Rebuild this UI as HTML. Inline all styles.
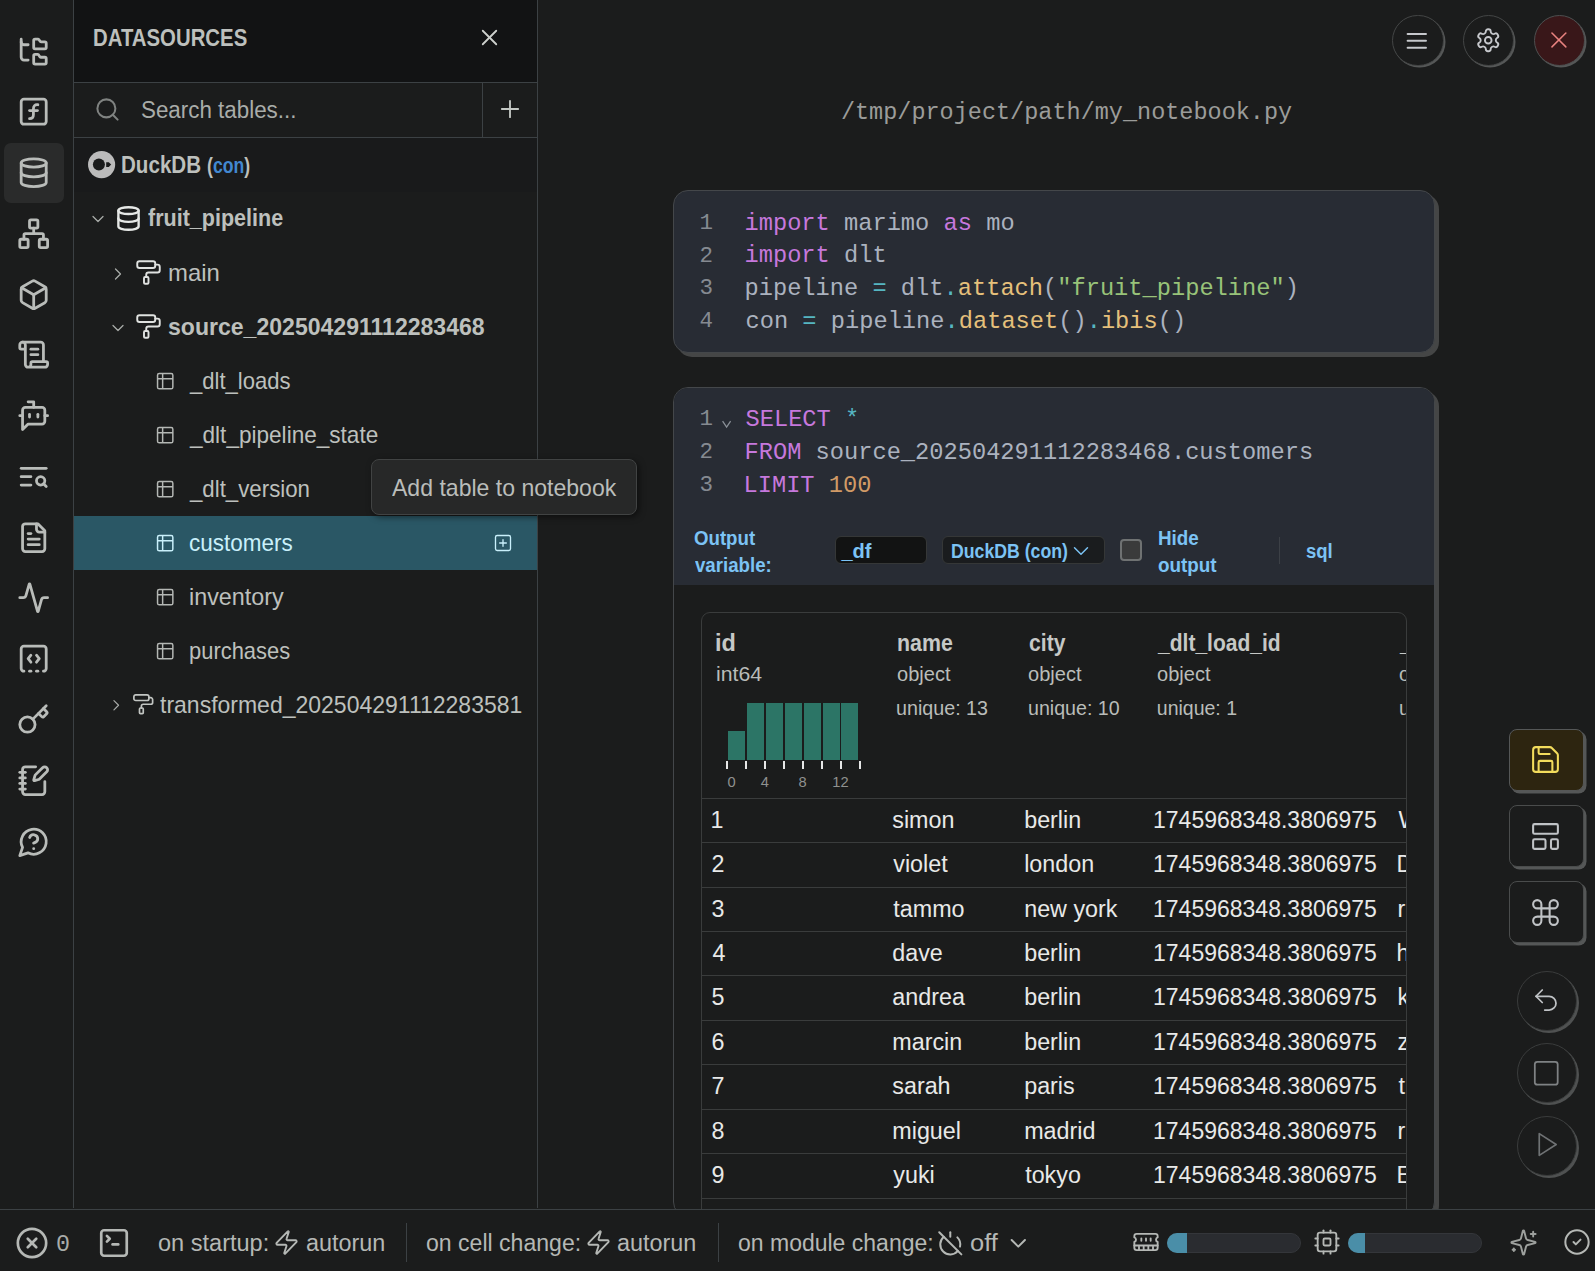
<!DOCTYPE html>
<html><head><meta charset="utf-8"><style>
html,body{margin:0;padding:0;}
body{width:1595px;height:1271px;overflow:hidden;position:relative;background:#1b1c1c;font-family:'Liberation Sans', sans-serif;}
.t{position:absolute;white-space:pre;line-height:1;}
.b{position:absolute;}
.ic{position:absolute;overflow:visible;}
</style></head><body>
<div class="b" style="left:0px;top:0px;width:73px;height:1208px;background:#1b1c1c;border-right:1px solid #3c4144"></div>
<div class="b" style="left:4px;top:143px;width:60px;height:60px;background:#2a2b2b;border-radius:7px"></div>
<svg class="ic" style="left:17.0px;top:34.5px;width:33.4px;height:33.4px;" viewBox="0 0 24 24" fill="none" stroke="#b9bcb9" stroke-width="2.0" stroke-linecap="round" stroke-linejoin="round"><path d="M20 10a1 1 0 0 0 1-1V6a1 1 0 0 0-1-1h-2.5a1 1 0 0 1-.8-.4l-.9-1.2A1 1 0 0 0 15 3h-2a1 1 0 0 0-1 1v5a1 1 0 0 0 1 1Z"/><path d="M20 21a1 1 0 0 0 1-1v-3a1 1 0 0 0-1-1h-2.9a1 1 0 0 1-.88-.55l-.42-.85a1 1 0 0 0-.92-.6H13a1 1 0 0 0-1 1v5a1 1 0 0 0 1 1Z"/><path d="M3 5a2 2 0 0 0 2 2h3"/><path d="M3 3v13a2 2 0 0 0 2 2h3"/></svg>
<svg class="ic" style="left:17.0px;top:95.3px;width:33.4px;height:33.4px;" viewBox="0 0 24 24" fill="none" stroke="#b9bcb9" stroke-width="2.0" stroke-linecap="round" stroke-linejoin="round"><rect width="18" height="18" x="3" y="3" rx="2" ry="2"/><path d="M9 17c2 0 2.8-1 2.8-2.8V10c0-2 1-3.3 3.2-3"/><path d="M9 11.2h5.7"/></svg>
<svg class="ic" style="left:17.0px;top:156.0px;width:33.4px;height:33.4px;" viewBox="0 0 24 24" fill="none" stroke="#b9bcb9" stroke-width="2.0" stroke-linecap="round" stroke-linejoin="round"><ellipse cx="12" cy="5" rx="9" ry="3"/><path d="M3 5V19A9 3 0 0 0 21 19V5"/><path d="M3 12A9 3 0 0 0 21 12"/></svg>
<svg class="ic" style="left:17.0px;top:216.8px;width:33.4px;height:33.4px;" viewBox="0 0 24 24" fill="none" stroke="#b9bcb9" stroke-width="2.0" stroke-linecap="round" stroke-linejoin="round"><rect x="16" y="16" width="6" height="6" rx="1"/><rect x="2" y="16" width="6" height="6" rx="1"/><rect x="9" y="2" width="6" height="6" rx="1"/><path d="M5 16v-3a1 1 0 0 1 1-1h12a1 1 0 0 1 1 1v3"/><path d="M12 12V8"/></svg>
<svg class="ic" style="left:17.0px;top:277.6px;width:33.4px;height:33.4px;" viewBox="0 0 24 24" fill="none" stroke="#b9bcb9" stroke-width="2.0" stroke-linecap="round" stroke-linejoin="round"><path d="M21 8a2 2 0 0 0-1-1.73l-7-4a2 2 0 0 0-2 0l-7 4A2 2 0 0 0 3 8v8a2 2 0 0 0 1 1.73l7 4a2 2 0 0 0 2 0l7-4A2 2 0 0 0 21 16Z"/><path d="m3.3 7 8.7 5 8.7-5"/><path d="M12 22V12"/></svg>
<svg class="ic" style="left:17.0px;top:338.4px;width:33.4px;height:33.4px;" viewBox="0 0 24 24" fill="none" stroke="#b9bcb9" stroke-width="2.0" stroke-linecap="round" stroke-linejoin="round"><path d="M15 12h-5"/><path d="M15 8h-5"/><path d="M19 17V5a2 2 0 0 0-2-2H4"/><path d="M8 21h12a2 2 0 0 0 2-2v-1a1 1 0 0 0-1-1H11a1 1 0 0 0-1 1v1a2 2 0 1 1-4 0V5a2 2 0 1 0-4 0v2a1 1 0 0 0 1 1h3"/></svg>
<svg class="ic" style="left:17.0px;top:399.1px;width:33.4px;height:33.4px;" viewBox="0 0 24 24" fill="none" stroke="#b9bcb9" stroke-width="2.0" stroke-linecap="round" stroke-linejoin="round"><path d="M12 6V2H8"/><path d="m8 18-4 4V8a2 2 0 0 1 2-2h12a2 2 0 0 1 2 2v8a2 2 0 0 1-2 2Z"/><path d="M2 12h2"/><path d="M9 11v2"/><path d="M15 11v2"/><path d="M20 12h2"/></svg>
<svg class="ic" style="left:17.0px;top:459.9px;width:33.4px;height:33.4px;" viewBox="0 0 24 24" fill="none" stroke="#b9bcb9" stroke-width="2.0" stroke-linecap="round" stroke-linejoin="round"><path d="M21 6H3"/><path d="M10 12H3"/><path d="M10 18H3"/><circle cx="17" cy="15" r="3"/><path d="m21 19-1.9-1.9"/></svg>
<svg class="ic" style="left:17.0px;top:520.7px;width:33.4px;height:33.4px;" viewBox="0 0 24 24" fill="none" stroke="#b9bcb9" stroke-width="2.0" stroke-linecap="round" stroke-linejoin="round"><path d="M15 2H6a2 2 0 0 0-2 2v16a2 2 0 0 0 2 2h12a2 2 0 0 0 2-2V7Z"/><path d="M14 2v4a2 2 0 0 0 2 2h4"/><path d="M10 9H8"/><path d="M16 13H8"/><path d="M16 17H8"/></svg>
<svg class="ic" style="left:17.0px;top:581.4px;width:33.4px;height:33.4px;" viewBox="0 0 24 24" fill="none" stroke="#b9bcb9" stroke-width="2.0" stroke-linecap="round" stroke-linejoin="round"><path d="M22 12h-2.48a2 2 0 0 0-1.93 1.46l-2.35 8.36a.25.25 0 0 1-.48 0L9.24 2.18a.25.25 0 0 0-.48 0l-2.35 8.36A2 2 0 0 1 4.49 12H2"/></svg>
<svg class="ic" style="left:17.0px;top:642.2px;width:33.4px;height:33.4px;" viewBox="0 0 24 24" fill="none" stroke="#b9bcb9" stroke-width="2.0" stroke-linecap="round" stroke-linejoin="round"><path d="M10 9.5 8 12l2 2.5"/><path d="M14 21h1"/><path d="m14 9.5 2 2.5-2 2.5"/><path d="M5 21a2 2 0 0 1-2-2V5a2 2 0 0 1 2-2h14a2 2 0 0 1 2 2v14a2 2 0 0 1-2 2"/><path d="M9 21h1"/></svg>
<svg class="ic" style="left:17.0px;top:703.0px;width:33.4px;height:33.4px;" viewBox="0 0 24 24" fill="none" stroke="#b9bcb9" stroke-width="2.0" stroke-linecap="round" stroke-linejoin="round"><path d="m15.5 7.5 2.3 2.3a1 1 0 0 0 1.4 0l2.1-2.1a1 1 0 0 0 0-1.4L19 4"/><path d="m21 2-9.6 9.6"/><circle cx="7.5" cy="15.5" r="5.5"/></svg>
<svg class="ic" style="left:17.0px;top:763.7px;width:33.4px;height:33.4px;" viewBox="0 0 24 24" fill="none" stroke="#b9bcb9" stroke-width="2.0" stroke-linecap="round" stroke-linejoin="round"><path d="M13.4 2H6a2 2 0 0 0-2 2v16a2 2 0 0 0 2 2h12a2 2 0 0 0 2-2v-7.4"/><path d="M2 6h4"/><path d="M2 10h4"/><path d="M2 14h4"/><path d="M2 18h4"/><path d="M21.378 5.626a1 1 0 1 0-3.004-3.004l-5.01 5.012a2 2 0 0 0-.506.854l-.837 2.87a.5.5 0 0 0 .62.62l2.87-.837a2 2 0 0 0 .854-.506z"/></svg>
<svg class="ic" style="left:17.0px;top:824.5px;width:33.4px;height:33.4px;" viewBox="0 0 24 24" fill="none" stroke="#b9bcb9" stroke-width="2.0" stroke-linecap="round" stroke-linejoin="round"><path d="M7.9 20A9 9 0 1 0 4 16.1L2 22Z"/><path d="M9.09 9a3 3 0 0 1 5.83 1c0 2-3 3-3 3"/><path d="M12 17h.01"/></svg>
<div class="b" style="left:74px;top:0px;width:463px;height:82px;background:#121314"></div>
<div class="b" style="left:74px;top:82px;width:463px;height:1px;background:#3c4144"></div>
<div class="b" style="left:74px;top:137px;width:463px;height:1px;background:#3c4144"></div>
<div class="b" style="left:482px;top:83px;width:1px;height:54px;background:#3c4144"></div>
<div class="b" style="left:537px;top:0px;width:1px;height:1208px;background:#3c4144"></div>
<div class="b" style="left:74px;top:138px;width:463px;height:54px;background:#191a1b"></div>
<div class="t" style="left:93.1px;top:27px;font-size:23.7px;color:#bdc0bd;font-weight:700;font-family:'Liberation Sans', sans-serif;transform:scaleX(0.8596);transform-origin:0 0;">DATASOURCES</div>
<svg class="ic" style="left:475.8px;top:23.9px;width:27px;height:27px;" viewBox="0 0 24 24" fill="none" stroke="#cdd0cd" stroke-width="1.6" stroke-linecap="round" stroke-linejoin="round"><path d="M18 6 6 18"/><path d="m6 6 12 12"/></svg>
<svg class="ic" style="left:93.9px;top:95.7px;width:27px;height:27px;" viewBox="0 0 24 24" fill="none" stroke="#7f8280" stroke-width="1.8" stroke-linecap="round" stroke-linejoin="round"><circle cx="11" cy="11" r="8"/><path d="m21 21-4.3-4.3"/></svg>
<div class="t" style="left:141.2px;top:99px;font-size:23.5px;color:#a9aca9;font-weight:400;font-family:'Liberation Sans', sans-serif;transform:scaleX(0.9519);transform-origin:0 0;">Search tables...</div>
<svg class="ic" style="left:495.7px;top:95.3px;width:28px;height:28px;" viewBox="0 0 24 24" fill="none" stroke="#c4c8c4" stroke-width="1.6" stroke-linecap="round" stroke-linejoin="round"><path d="M5 12h14"/><path d="M12 5v14"/></svg>
<svg class="ic" style="left:87.9px;top:150.8px;width:27.2px;height:27.2px" viewBox="0 0 27.2 27.2"><circle cx="13.6" cy="13.6" r="13.6" fill="#bbbbbb"/><circle cx="10.9" cy="13.6" r="6" fill="#1a1b1b"/><path d="M18.2 11.3h2.6l2.4 2.3-2.4 2.3h-2.6z" fill="#1a1b1b"/></svg>
<div class="t" style="left:120.5px;top:153px;font-size:24px;color:#bdc0bd;font-weight:700;font-family:'Liberation Sans', sans-serif;transform:scaleX(0.8578);transform-origin:0 0;">DuckDB</div>
<div class="t" style="left:207.1px;top:156px;font-size:21.5px;color:#bdc0bd;font-weight:700;font-family:'Liberation Sans', sans-serif;transform:scaleX(0.8196);transform-origin:0 0;">(<span style="color:#4288d0">con</span>)</div>
<svg class="ic" style="left:88.0px;top:209.0px;width:20px;height:20px;" viewBox="0 0 24 24" fill="none" stroke="#a9aca9" stroke-width="1.5" stroke-linecap="round" stroke-linejoin="round"><path d="m6 9 6 6 6-6"/></svg>
<svg class="ic" style="left:115.0px;top:204.8px;width:27px;height:27px;" viewBox="0 0 24 24" fill="none" stroke="#e6e8e6" stroke-width="2.1" stroke-linecap="round" stroke-linejoin="round"><ellipse cx="12" cy="5" rx="9" ry="3"/><path d="M3 5V19A9 3 0 0 0 21 19V5"/><path d="M3 12A9 3 0 0 0 21 12"/></svg>
<div class="t" style="left:148.4px;top:207px;font-size:23.6px;color:#bdc0bd;font-weight:700;font-family:'Liberation Sans', sans-serif;transform:scaleX(0.9122);transform-origin:0 0;">fruit_pipeline</div>
<svg class="ic" style="left:108.4px;top:263.8px;width:20px;height:20px;" viewBox="0 0 24 24" fill="none" stroke="#a9aca9" stroke-width="1.5" stroke-linecap="round" stroke-linejoin="round"><path d="m9 18 6-6-6-6"/></svg>
<svg class="ic" style="left:135.0px;top:259.0px;width:27px;height:27px;" viewBox="0 0 24 24" fill="none" stroke="#e0e2e0" stroke-width="1.7" stroke-linecap="round" stroke-linejoin="round"><rect width="16" height="6" x="2" y="2" rx="2"/><path d="M10 16v-2a2 2 0 0 1 2-2h8a2 2 0 0 0 2-2V7a2 2 0 0 0-2-2h-2"/><rect width="4" height="6" x="8" y="16" rx="1"/></svg>
<div class="t" style="left:167.8px;top:262px;font-size:23.6px;color:#bdc0bd;font-weight:400;font-family:'Liberation Sans', sans-serif;transform:scaleX(1.0125);transform-origin:0 0;">main</div>
<svg class="ic" style="left:108.0px;top:317.7px;width:20px;height:20px;" viewBox="0 0 24 24" fill="none" stroke="#a9aca9" stroke-width="1.5" stroke-linecap="round" stroke-linejoin="round"><path d="m6 9 6 6 6-6"/></svg>
<svg class="ic" style="left:135.0px;top:313.0px;width:27px;height:27px;" viewBox="0 0 24 24" fill="none" stroke="#e0e2e0" stroke-width="1.7" stroke-linecap="round" stroke-linejoin="round"><rect width="16" height="6" x="2" y="2" rx="2"/><path d="M10 16v-2a2 2 0 0 1 2-2h8a2 2 0 0 0 2-2V7a2 2 0 0 0-2-2h-2"/><rect width="4" height="6" x="8" y="16" rx="1"/></svg>
<div class="t" style="left:167.7px;top:316px;font-size:23.6px;color:#bdc0bd;font-weight:700;font-family:'Liberation Sans', sans-serif;transform:scaleX(0.9771);transform-origin:0 0;">source_202504291112283468</div>
<div class="b" style="left:74px;top:516px;width:463px;height:54px;background:#2a5765"></div>
<svg class="ic" style="left:155.0px;top:370.8px;width:20.4px;height:20.4px;" viewBox="0 0 24 24" fill="none" stroke="#b4b7b4" stroke-width="1.75" stroke-linecap="round" stroke-linejoin="round"><path d="M9 3H5a2 2 0 0 0-2 2v4m6-6h10a2 2 0 0 1 2 2v4M9 3v18m0 0h10a2 2 0 0 0 2-2V9M9 21H5a2 2 0 0 1-2-2V9m0 0h18"/></svg>
<div class="t" style="left:189.6px;top:370px;font-size:23.6px;color:#bdc0bd;font-weight:400;font-family:'Liberation Sans', sans-serif;transform:scaleX(0.9346);transform-origin:0 0;">_dlt_loads</div>
<svg class="ic" style="left:155.0px;top:424.8px;width:20.4px;height:20.4px;" viewBox="0 0 24 24" fill="none" stroke="#b4b7b4" stroke-width="1.75" stroke-linecap="round" stroke-linejoin="round"><path d="M9 3H5a2 2 0 0 0-2 2v4m6-6h10a2 2 0 0 1 2 2v4M9 3v18m0 0h10a2 2 0 0 0 2-2V9M9 21H5a2 2 0 0 1-2-2V9m0 0h18"/></svg>
<div class="t" style="left:189.6px;top:424px;font-size:23.6px;color:#bdc0bd;font-weight:400;font-family:'Liberation Sans', sans-serif;transform:scaleX(0.9566);transform-origin:0 0;">_dlt_pipeline_state</div>
<svg class="ic" style="left:155.0px;top:478.8px;width:20.4px;height:20.4px;" viewBox="0 0 24 24" fill="none" stroke="#b4b7b4" stroke-width="1.75" stroke-linecap="round" stroke-linejoin="round"><path d="M9 3H5a2 2 0 0 0-2 2v4m6-6h10a2 2 0 0 1 2 2v4M9 3v18m0 0h10a2 2 0 0 0 2-2V9M9 21H5a2 2 0 0 1-2-2V9m0 0h18"/></svg>
<div class="t" style="left:189.6px;top:478px;font-size:23.6px;color:#bdc0bd;font-weight:400;font-family:'Liberation Sans', sans-serif;transform:scaleX(0.9429);transform-origin:0 0;">_dlt_version</div>
<svg class="ic" style="left:155.0px;top:532.8px;width:20.4px;height:20.4px;" viewBox="0 0 24 24" fill="none" stroke="#c9f0fb" stroke-width="1.75" stroke-linecap="round" stroke-linejoin="round"><path d="M9 3H5a2 2 0 0 0-2 2v4m6-6h10a2 2 0 0 1 2 2v4M9 3v18m0 0h10a2 2 0 0 0 2-2V9M9 21H5a2 2 0 0 1-2-2V9m0 0h18"/></svg>
<div class="t" style="left:188.6px;top:532px;font-size:23.6px;color:#c9f0fb;font-weight:400;font-family:'Liberation Sans', sans-serif;transform:scaleX(0.9533);transform-origin:0 0;">customers</div>
<svg class="ic" style="left:155.0px;top:586.8px;width:20.4px;height:20.4px;" viewBox="0 0 24 24" fill="none" stroke="#b4b7b4" stroke-width="1.75" stroke-linecap="round" stroke-linejoin="round"><path d="M9 3H5a2 2 0 0 0-2 2v4m6-6h10a2 2 0 0 1 2 2v4M9 3v18m0 0h10a2 2 0 0 0 2-2V9M9 21H5a2 2 0 0 1-2-2V9m0 0h18"/></svg>
<div class="t" style="left:188.6px;top:586px;font-size:23.6px;color:#bdc0bd;font-weight:400;font-family:'Liberation Sans', sans-serif;transform:scaleX(0.9895);transform-origin:0 0;">inventory</div>
<svg class="ic" style="left:155.0px;top:640.8px;width:20.4px;height:20.4px;" viewBox="0 0 24 24" fill="none" stroke="#b4b7b4" stroke-width="1.75" stroke-linecap="round" stroke-linejoin="round"><path d="M9 3H5a2 2 0 0 0-2 2v4m6-6h10a2 2 0 0 1 2 2v4M9 3v18m0 0h10a2 2 0 0 0 2-2V9M9 21H5a2 2 0 0 1-2-2V9m0 0h18"/></svg>
<div class="t" style="left:188.7px;top:640px;font-size:23.6px;color:#bdc0bd;font-weight:400;font-family:'Liberation Sans', sans-serif;transform:scaleX(0.9290);transform-origin:0 0;">purchases</div>
<svg class="ic" style="left:492.8px;top:533.0px;width:20px;height:20px;" viewBox="0 0 24 24" fill="none" stroke="#c9f0fb" stroke-width="1.6" stroke-linecap="round" stroke-linejoin="round"><rect width="18" height="18" x="3" y="3" rx="2"/><path d="M8 12h8"/><path d="M12 8v8"/></svg>
<svg class="ic" style="left:106.8px;top:696.1px;width:18.5px;height:18.5px;" viewBox="0 0 24 24" fill="none" stroke="#a9aca9" stroke-width="1.5" stroke-linecap="round" stroke-linejoin="round"><path d="m9 18 6-6-6-6"/></svg>
<svg class="ic" style="left:131.6px;top:693.0px;width:22.5px;height:22.5px;" viewBox="0 0 24 24" fill="none" stroke="#c2c5c2" stroke-width="1.8" stroke-linecap="round" stroke-linejoin="round"><rect width="16" height="6" x="2" y="2" rx="2"/><path d="M10 16v-2a2 2 0 0 1 2-2h8a2 2 0 0 0 2-2V7a2 2 0 0 0-2-2h-2"/><rect width="4" height="6" x="8" y="16" rx="1"/></svg>
<div class="t" style="left:160.4px;top:694px;font-size:23.6px;color:#bdc0bd;font-weight:400;font-family:'Liberation Sans', sans-serif;transform:scaleX(0.9747);transform-origin:0 0;">transformed_202504291112283581</div>
<div class="b" style="left:370.8px;top:459.3px;width:266px;height:56px;background:#272828;border:1px solid #414343;border-radius:8px;box-sizing:border-box;box-shadow:2px 2px 6px rgba(0,0,0,.5)"></div>
<div class="t" style="left:392.2px;top:477px;font-size:23.6px;color:#babdba;font-weight:400;font-family:'Liberation Sans', sans-serif;transform:scaleX(0.9769);transform-origin:0 0;">Add table to notebook</div>
<div class="b" style="left:1392.2px;top:14.9px;width:51.5px;height:51.5px;border-radius:50%;background:#1b1c1c;border:1px solid #444646;box-sizing:border-box;box-shadow:1.5px 1.5px 0 0 #555757"></div>
<svg class="ic" style="left:1402.7px;top:26.6px;width:27.6px;height:27.6px;" viewBox="0 0 24 24" fill="none" stroke="#c6c8cc" stroke-width="1.7" stroke-linecap="round" stroke-linejoin="round"><line x1="4" x2="20" y1="12" y2="12"/><line x1="4" x2="20" y1="6" y2="6"/><line x1="4" x2="20" y1="18" y2="18"/></svg>
<div class="b" style="left:1462.8px;top:14.9px;width:51.5px;height:51.5px;border-radius:50%;background:#1b1c1c;border:1px solid #444646;box-sizing:border-box;box-shadow:1.5px 1.5px 0 0 #555757"></div>
<svg class="ic" style="left:1475.2px;top:27.2px;width:26.5px;height:26.5px;" viewBox="0 0 24 24" fill="none" stroke="#c6c8cc" stroke-width="1.7" stroke-linecap="round" stroke-linejoin="round"><path d="M12.22 2h-.44a2 2 0 0 0-2 2v.18a2 2 0 0 1-1 1.73l-.43.25a2 2 0 0 1-2 0l-.15-.08a2 2 0 0 0-2.73.73l-.22.38a2 2 0 0 0 .73 2.73l.15.1a2 2 0 0 1 1 1.72v.51a2 2 0 0 1-1 1.74l-.15.09a2 2 0 0 0-.73 2.73l.22.38a2 2 0 0 0 2.73.73l.15-.08a2 2 0 0 1 2 0l.43.25a2 2 0 0 1 1 1.73V20a2 2 0 0 0 2 2h.44a2 2 0 0 0 2-2v-.18a2 2 0 0 1 1-1.73l.43-.25a2 2 0 0 1 2 0l.15.08a2 2 0 0 0 2.73-.73l.22-.39a2 2 0 0 0-.73-2.73l-.15-.08a2 2 0 0 1-1-1.74v-.5a2 2 0 0 1 1-1.74l.15-.09a2 2 0 0 0 .73-2.73l-.22-.38a2 2 0 0 0-2.73-.73l-.15.08a2 2 0 0 1-2 0l-.43-.25a2 2 0 0 1-1-1.73V4a2 2 0 0 0-2-2z"/><circle cx="12" cy="12" r="3"/></svg>
<div class="b" style="left:1533.8px;top:14.9px;width:51.5px;height:51.5px;border-radius:50%;background:#391719;border:1px solid #4d4f4f;box-sizing:border-box;box-shadow:1.5px 1.5px 0 0 #555757"></div>
<svg class="ic" style="left:1545.1px;top:26.4px;width:27.8px;height:27.8px;" viewBox="0 0 24 24" fill="none" stroke="#e8827f" stroke-width="1.3" stroke-linecap="round" stroke-linejoin="round"><path d="M18 6 6 18"/><path d="m6 6 12 12"/></svg>
<div class="t" style="left:840.9px;top:101px;font-size:23.5px;color:#9b9c9a;font-weight:400;font-family:'Liberation Mono', monospace;">/tmp/project/path/my_notebook.py</div>
<div class="b" style="left:673px;top:190px;width:762px;height:163px;background:#282c34;border:1px solid #44474a;border-radius:15px;box-sizing:border-box;box-shadow:4px 4px 0 0 #454646"></div>
<div class="t" style="left:663.0px;top:212px;font-size:22.5px;color:#858a91;font-weight:400;font-family:'Liberation Mono', monospace;width:50px;text-align:right">1</div>
<div class="t" style="left:744.5px;top:212px;font-size:23.7px;color:#abb2bf;font-weight:400;font-family:'Liberation Mono', monospace;"><span style="color:#c678dd">import</span> marimo <span style="color:#c678dd">as</span> mo</div>
<div class="t" style="left:663.0px;top:245px;font-size:22.5px;color:#858a91;font-weight:400;font-family:'Liberation Mono', monospace;width:50px;text-align:right">2</div>
<div class="t" style="left:744.5px;top:244px;font-size:23.7px;color:#abb2bf;font-weight:400;font-family:'Liberation Mono', monospace;"><span style="color:#c678dd">import</span> dlt</div>
<div class="t" style="left:663.0px;top:277px;font-size:22.5px;color:#858a91;font-weight:400;font-family:'Liberation Mono', monospace;width:50px;text-align:right">3</div>
<div class="t" style="left:744.5px;top:277px;font-size:23.7px;color:#abb2bf;font-weight:400;font-family:'Liberation Mono', monospace;">pipeline <span style="color:#56b6c2">=</span> dlt<span style="color:#56b6c2">.</span><span style="color:#e5c07b">attach</span>(<span style="color:#98c379">"fruit_pipeline"</span>)</div>
<div class="t" style="left:663.0px;top:310px;font-size:22.5px;color:#858a91;font-weight:400;font-family:'Liberation Mono', monospace;width:50px;text-align:right">4</div>
<div class="t" style="left:745.5px;top:310px;font-size:23.7px;color:#abb2bf;font-weight:400;font-family:'Liberation Mono', monospace;">con <span style="color:#56b6c2">=</span> pipeline<span style="color:#56b6c2">.</span><span style="color:#e5c07b">dataset</span>()<span style="color:#56b6c2">.</span><span style="color:#e5c07b">ibis</span>()</div>
<div class="b" style="left:673px;top:387px;width:762px;height:830px;background:#1b1c1c;border:1px solid #44474a;border-radius:15px;box-sizing:border-box;box-shadow:4px 4px 0 0 #454646;overflow:hidden"></div>
<div class="b" style="left:674px;top:388px;width:760px;height:197px;background:#282c34;border-radius:14px 14px 0 0"></div>
<div class="t" style="left:663.0px;top:408px;font-size:22.5px;color:#858a91;font-weight:400;font-family:'Liberation Mono', monospace;width:50px;text-align:right">1</div>
<div class="t" style="left:745.5px;top:408px;font-size:23.7px;color:#abb2bf;font-weight:400;font-family:'Liberation Mono', monospace;"><span style="color:#c678dd">SELECT</span> <span style="color:#56b6c2">*</span></div>
<div class="t" style="left:663.0px;top:441px;font-size:22.5px;color:#858a91;font-weight:400;font-family:'Liberation Mono', monospace;width:50px;text-align:right">2</div>
<div class="t" style="left:744.5px;top:441px;font-size:23.7px;color:#abb2bf;font-weight:400;font-family:'Liberation Mono', monospace;"><span style="color:#c678dd">FROM</span> source_202504291112283468.customers</div>
<div class="t" style="left:663.0px;top:474px;font-size:22.5px;color:#858a91;font-weight:400;font-family:'Liberation Mono', monospace;width:50px;text-align:right">3</div>
<div class="t" style="left:743.5px;top:474px;font-size:23.7px;color:#abb2bf;font-weight:400;font-family:'Liberation Mono', monospace;"><span style="color:#c678dd">LIMIT</span> <span style="color:#d19a66">100</span></div>
<svg class="ic" style="left:720px;top:418px;width:14px;height:12px" viewBox="720 418 14 12"><polyline points="722.6,421.2 726.6,427 730.6,421.2" fill="none" stroke="#8a9097" stroke-width="1.3"/></svg>
<div class="t" style="left:694.0px;top:528px;font-size:20px;color:#7cc3f4;font-weight:700;font-family:'Liberation Sans', sans-serif;transform:scaleX(0.9328);transform-origin:0 0;">Output</div>
<div class="t" style="left:694.9px;top:555px;font-size:20px;color:#7cc3f4;font-weight:700;font-family:'Liberation Sans', sans-serif;transform:scaleX(0.9325);transform-origin:0 0;">variable:</div>
<div class="b" style="left:834.5px;top:536.4px;width:92px;height:28px;background:#121313;border:1px solid #353737;border-radius:6px;box-sizing:border-box"></div>
<div class="t" style="left:841.5px;top:541px;font-size:20px;color:#7cc3f4;font-weight:700;font-family:'Liberation Sans', sans-serif;">_df</div>
<div class="b" style="left:941.6px;top:536.4px;width:163.5px;height:28px;background:#1a1c1e;border:1px solid #353737;border-radius:6px;box-sizing:border-box"></div>
<div class="t" style="left:951.1px;top:541px;font-size:20px;color:#7cc3f4;font-weight:700;font-family:'Liberation Sans', sans-serif;transform:scaleX(0.8846);transform-origin:0 0;">DuckDB (con)</div>
<svg class="ic" style="left:1068.3px;top:537.5px;width:26px;height:26px;" viewBox="0 0 24 24" fill="none" stroke="#7cc3f4" stroke-width="1.35" stroke-linecap="round" stroke-linejoin="round"><path d="m6 9 6 6 6-6"/></svg>
<div class="b" style="left:1120px;top:539.3px;width:22px;height:22px;background:#3a3b3b;border:2px solid #6f7272;border-radius:4px;box-sizing:border-box"></div>
<div class="t" style="left:1157.9px;top:528px;font-size:20px;color:#7cc3f4;font-weight:700;font-family:'Liberation Sans', sans-serif;transform:scaleX(0.9405);transform-origin:0 0;">Hide</div>
<div class="t" style="left:1157.9px;top:555px;font-size:20px;color:#7cc3f4;font-weight:700;font-family:'Liberation Sans', sans-serif;transform:scaleX(0.9426);transform-origin:0 0;">output</div>
<div class="b" style="left:1279px;top:537px;width:1px;height:27px;background:#3c4046"></div>
<div class="t" style="left:1306.1px;top:541px;font-size:20px;color:#7cc3f4;font-weight:700;font-family:'Liberation Sans', sans-serif;transform:scaleX(0.9259);transform-origin:0 0;">sql</div>
<div class="b" style="left:701px;top:612px;width:706px;height:640px;border:1px solid #3a3c3c;border-radius:9px;box-sizing:border-box;overflow:hidden;background:#1b1c1c">
<div class="t" style="left:13.0px;top:19px;font-size:23.5px;color:#c6c8c6;font-weight:700;font-family:'Liberation Sans', sans-serif;transform:scaleX(1.0000);transform-origin:0 0;">id</div>
<div class="t" style="left:13.9px;top:52px;font-size:19.5px;color:#b9bcb9;font-weight:400;font-family:'Liberation Sans', sans-serif;transform:scaleX(1.0902);transform-origin:0 0;">int64</div>
<div class="b" style="left:26.0px;top:118.2px;width:17px;height:28.4px;background:#2c7566"></div>
<div class="b" style="left:44.9px;top:90.1px;width:17px;height:56.5px;background:#2c7566"></div>
<div class="b" style="left:63.8px;top:90.1px;width:17px;height:56.5px;background:#2c7566"></div>
<div class="b" style="left:82.7px;top:90.1px;width:17px;height:56.5px;background:#2c7566"></div>
<div class="b" style="left:101.6px;top:90.1px;width:17px;height:56.5px;background:#2c7566"></div>
<div class="b" style="left:120.5px;top:90.1px;width:17px;height:56.5px;background:#2c7566"></div>
<div class="b" style="left:139.4px;top:90.1px;width:17px;height:56.5px;background:#2c7566"></div>
<div class="b" style="left:24.2px;top:147.8px;width:2px;height:8.7px;background:#e6e6e6"></div>
<div class="b" style="left:43.1px;top:147.8px;width:2px;height:8.7px;background:#e6e6e6"></div>
<div class="b" style="left:62.0px;top:147.8px;width:2px;height:8.7px;background:#e6e6e6"></div>
<div class="b" style="left:80.9px;top:147.8px;width:2px;height:8.7px;background:#e6e6e6"></div>
<div class="b" style="left:99.8px;top:147.8px;width:2px;height:8.7px;background:#e6e6e6"></div>
<div class="b" style="left:118.7px;top:147.8px;width:2px;height:8.7px;background:#e6e6e6"></div>
<div class="b" style="left:137.6px;top:147.8px;width:2px;height:8.7px;background:#e6e6e6"></div>
<div class="b" style="left:156.5px;top:147.8px;width:2px;height:8.7px;background:#e6e6e6"></div>
<div class="t" style="left:-0.3px;top:162px;font-size:14.7px;color:#8f918f;font-weight:400;font-family:'Liberation Sans', sans-serif;width:60px;text-align:center">0</div>
<div class="t" style="left:32.8px;top:162px;font-size:14.7px;color:#8f918f;font-weight:400;font-family:'Liberation Sans', sans-serif;width:60px;text-align:center">4</div>
<div class="t" style="left:70.6px;top:162px;font-size:14.7px;color:#8f918f;font-weight:400;font-family:'Liberation Sans', sans-serif;width:60px;text-align:center">8</div>
<div class="t" style="left:108.5px;top:162px;font-size:14.7px;color:#8f918f;font-weight:400;font-family:'Liberation Sans', sans-serif;width:60px;text-align:center">12</div>
<div class="t" style="left:194.9px;top:19px;font-size:23.5px;color:#c6c8c6;font-weight:700;font-family:'Liberation Sans', sans-serif;transform:scaleX(0.9083);transform-origin:0 0;">name</div>
<div class="t" style="left:194.8px;top:52px;font-size:19.5px;color:#b9bcb9;font-weight:400;font-family:'Liberation Sans', sans-serif;transform:scaleX(1.0275);transform-origin:0 0;">object</div>
<div class="t" style="left:193.9px;top:86px;font-size:19.5px;color:#b9bcb9;font-weight:400;font-family:'Liberation Sans', sans-serif;transform:scaleX(1.0101);transform-origin:0 0;">unique: 13</div>
<div class="t" style="left:326.5px;top:19px;font-size:23.5px;color:#c6c8c6;font-weight:700;font-family:'Liberation Sans', sans-serif;transform:scaleX(0.9000);transform-origin:0 0;">city</div>
<div class="t" style="left:326.4px;top:52px;font-size:19.5px;color:#b9bcb9;font-weight:400;font-family:'Liberation Sans', sans-serif;transform:scaleX(1.0275);transform-origin:0 0;">object</div>
<div class="t" style="left:325.6px;top:86px;font-size:19.5px;color:#b9bcb9;font-weight:400;font-family:'Liberation Sans', sans-serif;transform:scaleX(1.0056);transform-origin:0 0;">unique: 10</div>
<div class="t" style="left:456.3px;top:19px;font-size:23.5px;color:#c6c8c6;font-weight:700;font-family:'Liberation Sans', sans-serif;transform:scaleX(0.8949);transform-origin:0 0;">_dlt_load_id</div>
<div class="t" style="left:455.3px;top:52px;font-size:19.5px;color:#b9bcb9;font-weight:400;font-family:'Liberation Sans', sans-serif;transform:scaleX(1.0275);transform-origin:0 0;">object</div>
<div class="t" style="left:454.8px;top:86px;font-size:19.5px;color:#b9bcb9;font-weight:400;font-family:'Liberation Sans', sans-serif;transform:scaleX(1.0000);transform-origin:0 0;">unique: 1</div>
<div class="t" style="left:698.0px;top:19px;font-size:23.5px;color:#c6c8c6;font-weight:700;font-family:'Liberation Sans', sans-serif;">_id</div>
<div class="t" style="left:697.0px;top:52px;font-size:19.5px;color:#b9bcb9;font-weight:400;font-family:'Liberation Sans', sans-serif;">object</div>
<div class="t" style="left:697.0px;top:86px;font-size:19.5px;color:#b9bcb9;font-weight:400;font-family:'Liberation Sans', sans-serif;">unique: 9</div>
<div class="b" style="left:0;top:185px;width:705px;height:1px;background:#3a3c3c"></div>
<div class="b" style="left:0;top:229px;width:705px;height:1px;background:#3a3c3c"></div>
<div class="b" style="left:0;top:274px;width:705px;height:1px;background:#3a3c3c"></div>
<div class="b" style="left:0;top:318px;width:705px;height:1px;background:#3a3c3c"></div>
<div class="b" style="left:0;top:362px;width:705px;height:1px;background:#3a3c3c"></div>
<div class="b" style="left:0;top:407px;width:705px;height:1px;background:#3a3c3c"></div>
<div class="b" style="left:0;top:451px;width:705px;height:1px;background:#3a3c3c"></div>
<div class="b" style="left:0;top:496px;width:705px;height:1px;background:#3a3c3c"></div>
<div class="b" style="left:0;top:540px;width:705px;height:1px;background:#3a3c3c"></div>
<div class="b" style="left:0;top:585px;width:705px;height:1px;background:#3a3c3c"></div>
<div class="t" style="left:8.6px;top:196px;font-size:23.3px;color:#e8e9e8;font-weight:400;font-family:'Liberation Sans', sans-serif;">1</div>
<div class="t" style="left:190.3px;top:196px;font-size:23.3px;color:#e8e9e8;font-weight:400;font-family:'Liberation Sans', sans-serif;">simon</div>
<div class="t" style="left:322.2px;top:196px;font-size:23.3px;color:#e8e9e8;font-weight:400;font-family:'Liberation Sans', sans-serif;">berlin</div>
<div class="t" style="left:450.8px;top:196px;font-size:23.3px;color:#e8e9e8;font-weight:400;font-family:'Liberation Sans', sans-serif;transform:scaleX(0.9875);transform-origin:0 0;">1745968348.3806975</div>
<div class="t" style="left:696.6px;top:196px;font-size:23.3px;color:#e8e9e8;font-weight:400;font-family:'Liberation Sans', sans-serif;">W</div>
<div class="t" style="left:9.6px;top:240px;font-size:23.3px;color:#e8e9e8;font-weight:400;font-family:'Liberation Sans', sans-serif;">2</div>
<div class="t" style="left:191.3px;top:240px;font-size:23.3px;color:#e8e9e8;font-weight:400;font-family:'Liberation Sans', sans-serif;">violet</div>
<div class="t" style="left:322.2px;top:240px;font-size:23.3px;color:#e8e9e8;font-weight:400;font-family:'Liberation Sans', sans-serif;">london</div>
<div class="t" style="left:450.8px;top:240px;font-size:23.3px;color:#e8e9e8;font-weight:400;font-family:'Liberation Sans', sans-serif;transform:scaleX(0.9875);transform-origin:0 0;">1745968348.3806975</div>
<div class="t" style="left:694.6px;top:240px;font-size:23.3px;color:#e8e9e8;font-weight:400;font-family:'Liberation Sans', sans-serif;">D</div>
<div class="t" style="left:9.6px;top:285px;font-size:23.3px;color:#e8e9e8;font-weight:400;font-family:'Liberation Sans', sans-serif;">3</div>
<div class="t" style="left:191.3px;top:285px;font-size:23.3px;color:#e8e9e8;font-weight:400;font-family:'Liberation Sans', sans-serif;">tammo</div>
<div class="t" style="left:322.2px;top:285px;font-size:23.3px;color:#e8e9e8;font-weight:400;font-family:'Liberation Sans', sans-serif;">new york</div>
<div class="t" style="left:450.8px;top:285px;font-size:23.3px;color:#e8e9e8;font-weight:400;font-family:'Liberation Sans', sans-serif;transform:scaleX(0.9875);transform-origin:0 0;">1745968348.3806975</div>
<div class="t" style="left:695.6px;top:285px;font-size:23.3px;color:#e8e9e8;font-weight:400;font-family:'Liberation Sans', sans-serif;">r</div>
<div class="t" style="left:10.6px;top:329px;font-size:23.3px;color:#e8e9e8;font-weight:400;font-family:'Liberation Sans', sans-serif;">4</div>
<div class="t" style="left:190.3px;top:329px;font-size:23.3px;color:#e8e9e8;font-weight:400;font-family:'Liberation Sans', sans-serif;">dave</div>
<div class="t" style="left:322.2px;top:329px;font-size:23.3px;color:#e8e9e8;font-weight:400;font-family:'Liberation Sans', sans-serif;">berlin</div>
<div class="t" style="left:450.8px;top:329px;font-size:23.3px;color:#e8e9e8;font-weight:400;font-family:'Liberation Sans', sans-serif;transform:scaleX(0.9875);transform-origin:0 0;">1745968348.3806975</div>
<div class="t" style="left:694.6px;top:329px;font-size:23.3px;color:#e8e9e8;font-weight:400;font-family:'Liberation Sans', sans-serif;">h</div>
<div class="t" style="left:9.6px;top:373px;font-size:23.3px;color:#e8e9e8;font-weight:400;font-family:'Liberation Sans', sans-serif;">5</div>
<div class="t" style="left:190.3px;top:373px;font-size:23.3px;color:#e8e9e8;font-weight:400;font-family:'Liberation Sans', sans-serif;">andrea</div>
<div class="t" style="left:322.2px;top:373px;font-size:23.3px;color:#e8e9e8;font-weight:400;font-family:'Liberation Sans', sans-serif;">berlin</div>
<div class="t" style="left:450.8px;top:373px;font-size:23.3px;color:#e8e9e8;font-weight:400;font-family:'Liberation Sans', sans-serif;transform:scaleX(0.9875);transform-origin:0 0;">1745968348.3806975</div>
<div class="t" style="left:695.6px;top:373px;font-size:23.3px;color:#e8e9e8;font-weight:400;font-family:'Liberation Sans', sans-serif;">k</div>
<div class="t" style="left:9.6px;top:418px;font-size:23.3px;color:#e8e9e8;font-weight:400;font-family:'Liberation Sans', sans-serif;">6</div>
<div class="t" style="left:190.3px;top:418px;font-size:23.3px;color:#e8e9e8;font-weight:400;font-family:'Liberation Sans', sans-serif;">marcin</div>
<div class="t" style="left:322.2px;top:418px;font-size:23.3px;color:#e8e9e8;font-weight:400;font-family:'Liberation Sans', sans-serif;">berlin</div>
<div class="t" style="left:450.8px;top:418px;font-size:23.3px;color:#e8e9e8;font-weight:400;font-family:'Liberation Sans', sans-serif;transform:scaleX(0.9875);transform-origin:0 0;">1745968348.3806975</div>
<div class="t" style="left:695.6px;top:418px;font-size:23.3px;color:#e8e9e8;font-weight:400;font-family:'Liberation Sans', sans-serif;">z</div>
<div class="t" style="left:9.6px;top:462px;font-size:23.3px;color:#e8e9e8;font-weight:400;font-family:'Liberation Sans', sans-serif;">7</div>
<div class="t" style="left:190.3px;top:462px;font-size:23.3px;color:#e8e9e8;font-weight:400;font-family:'Liberation Sans', sans-serif;">sarah</div>
<div class="t" style="left:322.2px;top:462px;font-size:23.3px;color:#e8e9e8;font-weight:400;font-family:'Liberation Sans', sans-serif;">paris</div>
<div class="t" style="left:450.8px;top:462px;font-size:23.3px;color:#e8e9e8;font-weight:400;font-family:'Liberation Sans', sans-serif;transform:scaleX(0.9875);transform-origin:0 0;">1745968348.3806975</div>
<div class="t" style="left:696.6px;top:462px;font-size:23.3px;color:#e8e9e8;font-weight:400;font-family:'Liberation Sans', sans-serif;">t</div>
<div class="t" style="left:9.6px;top:507px;font-size:23.3px;color:#e8e9e8;font-weight:400;font-family:'Liberation Sans', sans-serif;">8</div>
<div class="t" style="left:190.3px;top:507px;font-size:23.3px;color:#e8e9e8;font-weight:400;font-family:'Liberation Sans', sans-serif;">miguel</div>
<div class="t" style="left:322.2px;top:507px;font-size:23.3px;color:#e8e9e8;font-weight:400;font-family:'Liberation Sans', sans-serif;">madrid</div>
<div class="t" style="left:450.8px;top:507px;font-size:23.3px;color:#e8e9e8;font-weight:400;font-family:'Liberation Sans', sans-serif;transform:scaleX(0.9875);transform-origin:0 0;">1745968348.3806975</div>
<div class="t" style="left:695.6px;top:507px;font-size:23.3px;color:#e8e9e8;font-weight:400;font-family:'Liberation Sans', sans-serif;">r</div>
<div class="t" style="left:9.6px;top:551px;font-size:23.3px;color:#e8e9e8;font-weight:400;font-family:'Liberation Sans', sans-serif;">9</div>
<div class="t" style="left:191.3px;top:551px;font-size:23.3px;color:#e8e9e8;font-weight:400;font-family:'Liberation Sans', sans-serif;">yuki</div>
<div class="t" style="left:323.2px;top:551px;font-size:23.3px;color:#e8e9e8;font-weight:400;font-family:'Liberation Sans', sans-serif;">tokyo</div>
<div class="t" style="left:450.8px;top:551px;font-size:23.3px;color:#e8e9e8;font-weight:400;font-family:'Liberation Sans', sans-serif;transform:scaleX(0.9875);transform-origin:0 0;">1745968348.3806975</div>
<div class="t" style="left:694.6px;top:551px;font-size:23.3px;color:#e8e9e8;font-weight:400;font-family:'Liberation Sans', sans-serif;">E</div>
</div>
<div class="b" style="left:1508.5px;top:729.3px;width:75px;height:61.5px;border-radius:8px;background:#2d2510;border:1px solid #555757;box-sizing:border-box;box-shadow:2.5px 2.5px 0 0 #555757"></div>
<svg class="ic" style="left:1529.3px;top:743.0px;width:33px;height:33px;" viewBox="0 0 24 24" fill="none" stroke="#f2dc5c" stroke-width="1.5" stroke-linecap="round" stroke-linejoin="round"><path d="M15.2 3a2 2 0 0 1 1.4.6l3.8 3.8a2 2 0 0 1 .6 1.4V19a2 2 0 0 1-2 2H5a2 2 0 0 1-2-2V5a2 2 0 0 1 2-2z"/><path d="M17 21v-7a1 1 0 0 0-1-1H8a1 1 0 0 0-1 1v7"/><path d="M7 3v4a1 1 0 0 0 1 1h7"/></svg>
<div class="b" style="left:1508.5px;top:805.3px;width:75px;height:61.5px;border-radius:8px;background:#1b1c1c;border:1px solid #4a4c4c;box-sizing:border-box;box-shadow:2.5px 2.5px 0 0 #555757"></div>
<svg class="ic" style="left:1529.3px;top:819.8px;width:33px;height:33px;" viewBox="0 0 24 24" fill="none" stroke="#c0c3c6" stroke-width="1.5" stroke-linecap="round" stroke-linejoin="round"><rect width="18" height="7" x="3" y="3" rx="1"/><rect width="9" height="7" x="3" y="14" rx="1"/><rect width="5" height="7" x="16" y="14" rx="1"/></svg>
<div class="b" style="left:1508.5px;top:881px;width:75px;height:61.5px;border-radius:8px;background:#1b1c1c;border:1px solid #4a4c4c;box-sizing:border-box;box-shadow:2.5px 2.5px 0 0 #555757"></div>
<svg class="ic" style="left:1529.3px;top:895.5px;width:33px;height:33px;" viewBox="0 0 24 24" fill="none" stroke="#c0c3c6" stroke-width="1.5" stroke-linecap="round" stroke-linejoin="round"><path d="M15 6v12a3 3 0 1 0 3-3H6a3 3 0 1 0 3 3V6a3 3 0 1 0-3 3h12a3 3 0 1 0-3-3"/></svg>
<div class="b" style="left:1517.0px;top:971.0px;width:60px;height:60px;border-radius:50%;background:#1b1c1c;border:1px solid #3a3c3c;box-sizing:border-box;box-shadow:2px 2px 0 0 #4f5151"></div>
<svg class="ic" style="left:1531.0px;top:984.5px;width:30px;height:30px;" viewBox="0 0 24 24" fill="none" stroke="#c0c3c6" stroke-width="1.4" stroke-linecap="round" stroke-linejoin="round"><path d="M9 14 4 9l5-5"/><path d="M4 9h10.5a5.5 5.5 0 0 1 5.5 5.5a5.5 5.5 0 0 1-5.5 5.5H11"/></svg>
<div class="b" style="left:1517.0px;top:1043.4px;width:60px;height:60px;border-radius:50%;background:#1b1c1c;border:1px solid #3a3c3c;box-sizing:border-box;box-shadow:2px 2px 0 0 #4f5151"></div>
<svg class="ic" style="left:1530.8px;top:1057.7px;width:30.5px;height:30.5px;" viewBox="0 0 24 24" fill="none" stroke="#7f8284" stroke-width="1.4" stroke-linecap="round" stroke-linejoin="round"><rect width="18" height="18" x="3" y="3" rx="2"/></svg>
<div class="b" style="left:1517.0px;top:1116.2px;width:60px;height:60px;border-radius:50%;background:#1b1c1c;border:1px solid #3a3c3c;box-sizing:border-box;box-shadow:2px 2px 0 0 #4f5151"></div>
<svg class="ic" style="left:1531.5px;top:1130.2px;width:29px;height:29px;" viewBox="0 0 24 24" fill="none" stroke="#6f7274" stroke-width="1.4" stroke-linecap="round" stroke-linejoin="round"><polygon points="6 3 20 12 6 21 6 3"/></svg>
<div class="b" style="left:0px;top:1209px;width:1595px;height:62px;background:#1b1c1c;border-top:1px solid #3c4144;box-sizing:border-box"></div>
<svg class="ic" style="left:14.8px;top:1225.6px;width:34px;height:34px;" viewBox="0 0 24 24" fill="none" stroke="#b5b8b5" stroke-width="1.9" stroke-linecap="round" stroke-linejoin="round"><circle cx="12" cy="12" r="10"/><path d="m15 9-6 6"/><path d="m9 9 6 6"/></svg>
<div class="t" style="left:56.0px;top:1233px;font-size:24.5px;color:#a9aca9;font-weight:400;font-family:'Liberation Mono', monospace;transform:scaleX(0.9500);transform-origin:0 0;">0</div>
<svg class="ic" style="left:96.8px;top:1225.7px;width:34px;height:34px;" viewBox="0 0 24 24" fill="none" stroke="#b5b8b5" stroke-width="1.9" stroke-linecap="round" stroke-linejoin="round"><path d="m7 11 2-2-2-2"/><path d="M11 13h4"/><rect width="18" height="18" x="3" y="3" rx="2" ry="2"/></svg>
<div class="t" style="left:157.6px;top:1232px;font-size:23.5px;color:#b5b8b5;font-weight:400;font-family:'Liberation Sans', sans-serif;transform:scaleX(1.0019);transform-origin:0 0;">on startup:</div>
<svg class="ic" style="left:272.5px;top:1228.9px;width:27px;height:27px;" viewBox="0 0 24 24" fill="none" stroke="#b5b8b5" stroke-width="1.7" stroke-linecap="round" stroke-linejoin="round"><path d="M4 14a1 1 0 0 1-.78-1.63l9.9-10.2a.5.5 0 0 1 .86.46l-1.92 6.02A1 1 0 0 0 13 10h7a1 1 0 0 1 .78 1.63l-9.9 10.2a.5.5 0 0 1-.86-.46l1.92-6.02A1 1 0 0 0 11 14z"/></svg>
<div class="t" style="left:305.7px;top:1232px;font-size:23.5px;color:#b5b8b5;font-weight:400;font-family:'Liberation Sans', sans-serif;transform:scaleX(0.9949);transform-origin:0 0;">autorun</div>
<div class="b" style="left:405.7px;top:1222.6px;width:1px;height:39px;background:#3c4144"></div>
<div class="t" style="left:425.5px;top:1232px;font-size:23.5px;color:#b5b8b5;font-weight:400;font-family:'Liberation Sans', sans-serif;transform:scaleX(0.9813);transform-origin:0 0;">on cell change:</div>
<svg class="ic" style="left:584.8px;top:1228.9px;width:27px;height:27px;" viewBox="0 0 24 24" fill="none" stroke="#b5b8b5" stroke-width="1.7" stroke-linecap="round" stroke-linejoin="round"><path d="M4 14a1 1 0 0 1-.78-1.63l9.9-10.2a.5.5 0 0 1 .86.46l-1.92 6.02A1 1 0 0 0 13 10h7a1 1 0 0 1 .78 1.63l-9.9 10.2a.5.5 0 0 1-.86-.46l1.92-6.02A1 1 0 0 0 11 14z"/></svg>
<div class="t" style="left:617.4px;top:1232px;font-size:23.5px;color:#b5b8b5;font-weight:400;font-family:'Liberation Sans', sans-serif;transform:scaleX(0.9949);transform-origin:0 0;">autorun</div>
<div class="b" style="left:717.7px;top:1222.6px;width:1px;height:39px;background:#3c4144"></div>
<div class="t" style="left:737.9px;top:1232px;font-size:23.5px;color:#b5b8b5;font-weight:400;font-family:'Liberation Sans', sans-serif;transform:scaleX(0.9787);transform-origin:0 0;">on module change:</div>
<svg class="ic" style="left:936.8px;top:1229.8px;width:26.6px;height:26.6px;" viewBox="0 0 24 24" fill="none" stroke="#b5b8b5" stroke-width="1.8" stroke-linecap="round" stroke-linejoin="round"><path d="M18.36 6.64A9 9 0 0 1 20.77 15"/><path d="M6.16 6.16a9 9 0 1 0 12.68 12.68"/><path d="M12 2v4"/><path d="m2 2 20 20"/></svg>
<div class="t" style="left:970.4px;top:1232px;font-size:23.5px;color:#b5b8b5;font-weight:400;font-family:'Liberation Sans', sans-serif;transform:scaleX(1.0840);transform-origin:0 0;">off</div>
<svg class="ic" style="left:1004.7px;top:1229.8px;width:26.6px;height:26.6px;" viewBox="0 0 24 24" fill="none" stroke="#b5b8b5" stroke-width="1.8" stroke-linecap="round" stroke-linejoin="round"><path d="m6 9 6 6 6-6"/></svg>
<svg class="ic" style="left:1131.5px;top:1228.4px;width:28px;height:28px;" viewBox="0 0 24 24" fill="none" stroke="#b5b8b5" stroke-width="1.6" stroke-linecap="round" stroke-linejoin="round"><path d="M6 19v-3"/><path d="M10 19v-3"/><path d="M14 19v-3"/><path d="M18 19v-3"/><path d="M8 11V9"/><path d="M16 11V9"/><path d="M12 11V9"/><path d="M2 15h20"/><path d="M2 7a2 2 0 0 1 2-2h16a2 2 0 0 1 2 2v1.1a2 2 0 0 0 0 3.837V17a2 2 0 0 1-2 2H4a2 2 0 0 1-2-2v-5.1a2 2 0 0 0 0-3.837Z"/></svg>
<div class="b" style="left:1166.6px;top:1233.2px;width:134.2px;height:19.6px;background:#2a2c30;border-radius:10px;overflow:hidden;border:1px solid #34363a;box-sizing:border-box"></div>
<div class="b" style="left:1166.6px;top:1233.2px;width:20.5px;height:19.6px;background:#4a8ea8;border-radius:10px 0 0 10px"></div>
<svg class="ic" style="left:1313.4px;top:1228.4px;width:28px;height:28px;" viewBox="0 0 24 24" fill="none" stroke="#b5b8b5" stroke-width="1.6" stroke-linecap="round" stroke-linejoin="round"><rect width="16" height="16" x="4" y="4" rx="2"/><rect width="6" height="6" x="9" y="9" rx="1"/><path d="M15 2v2"/><path d="M15 20v2"/><path d="M2 15h2"/><path d="M2 9h2"/><path d="M20 15h2"/><path d="M20 9h2"/><path d="M9 2v2"/><path d="M9 20v2"/></svg>
<div class="b" style="left:1348.4px;top:1233.2px;width:133.6px;height:19.6px;background:#2a2c30;border-radius:10px;overflow:hidden;border:1px solid #34363a;box-sizing:border-box"></div>
<div class="b" style="left:1348.4px;top:1233.2px;width:17px;height:19.6px;background:#4a8ea8;border-radius:10px 0 0 10px"></div>
<svg class="ic" style="left:1509.0px;top:1227.5px;width:29px;height:29px;" viewBox="0 0 24 24" fill="none" stroke="#9da09d" stroke-width="1.6" stroke-linecap="round" stroke-linejoin="round"><path d="M9.937 15.5A2 2 0 0 0 8.5 14.063l-6.135-1.582a.5.5 0 0 1 0-.962L8.5 9.936A2 2 0 0 0 9.937 8.5l1.582-6.135a.5.5 0 0 1 .963 0L14.063 8.5A2 2 0 0 0 15.5 9.937l6.135 1.581a.5.5 0 0 1 0 .964L15.5 14.063a2 2 0 0 0-1.437 1.437l-1.582 6.135a.5.5 0 0 1-.963 0z"/><path d="M20 3v4"/><path d="M22 5h-4"/><path d="M4 17v2"/><path d="M5 18H3"/></svg>
<svg class="ic" style="left:1563.2px;top:1228.0px;width:28px;height:28px;" viewBox="0 0 24 24" fill="none" stroke="#b5b8b5" stroke-width="1.7" stroke-linecap="round" stroke-linejoin="round"><circle cx="12" cy="12" r="10"/><path d="m9 12 2 2 4-4"/></svg>
</body></html>
